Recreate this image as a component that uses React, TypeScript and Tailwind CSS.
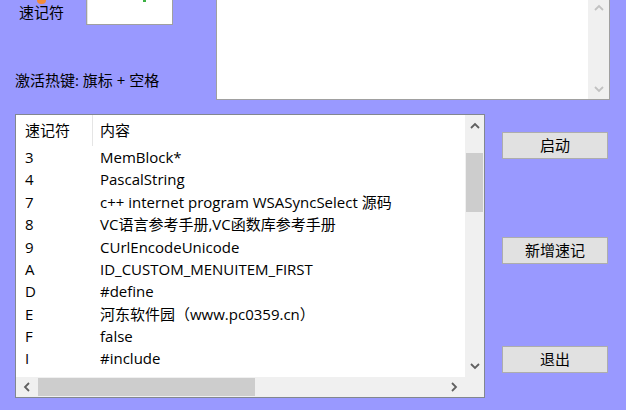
import React from "react"

const rows: [string, string][] = [
  ["3", "MemBlock*"],
  ["4", "PascalString"],
  ["7", "c++ internet program WSASyncSelect 源码"],
  ["8", "VC语言参考手册,VC函数库参考手册"],
  ["9", "CUrlEncodeUnicode"],
  ["A", "ID_CUSTOM_MENUITEM_FIRST"],
  ["D", "#define"],
  ["E", "河东软件园（www.pc0359.cn）"],
  ["F", "false"],
  ["I", "#include"],
]

function Chevron({ dir, color }: { dir: "up" | "down" | "left" | "right"; color: string }) {
  const pts = {
    up: "1,6 5,2 9,6",
    down: "1,2 5,6 9,2",
    left: "6,1 2,5 6,9",
    right: "2,1 6,5 2,9",
  }[dir]
  const w = dir === "up" || dir === "down" ? 10 : 8
  const h = dir === "up" || dir === "down" ? 8 : 10
  return (
    <svg width={w} height={h} viewBox={`0 0 ${w} ${h}`}>
      <polyline points={pts} fill="none" stroke={color} strokeWidth="1.8" />
    </svg>
  )
}

function Button({ label }: { label: string }) {
  return (
    <button className="w-[106px] h-[27px] bg-[#e1e1e1] border border-[#adadad] text-[15px] text-black leading-none">
      {label}
    </button>
  )
}

export default function App() {
  return (
    <div
      className="w-[626px] h-[410px] bg-[#9999ff] overflow-hidden text-[15px] text-black"
      style={{ fontFamily: '"Open Sans", "Noto Sans CJK SC", sans-serif' }}
    >
      {/* top area */}
      <div className="flex h-[100px]">
        <div className="w-[216px] relative">
          {/* partially visible icon */}
          <div className="absolute z-10 left-[37px] top-0 w-[9px] h-[4px] rounded-b-full bg-[#f08a3c]" />
          <div className="flex items-start pl-[19px]">
            <span className="mt-[2px] leading-[20px]">速记符</span>
            <div className="ml-[22px] -mt-[2px] w-[87px] h-[27px] bg-white border border-[#a0a0a0] shadow-[inset_1px_1px_0_#e3e3e3] relative">
              <div className="absolute left-[56px] top-0 w-[3px] h-[3px] bg-[#3cb043]" />
            </div>
          </div>
          <div className="pl-[15px] mt-[45px] leading-[20px]">激活热键: 旗标 + 空格</div>
        </div>
        <div className="-mt-[2px] w-[394px] h-[102px] bg-white border border-[#a0a0a0] flex justify-end">
          <div className="w-[21px] h-full bg-[#f0f0f0] flex flex-col items-center justify-between pt-[5px] pb-[6px]">
            <Chevron dir="up" color="#c2c2c2" />
            <Chevron dir="down" color="#c2c2c2" />
          </div>
        </div>
      </div>

      {/* bottom area */}
      <div className="flex mt-[14px]">
        <div className="ml-[15px] w-[470px] h-[284px] bg-white border border-[#828790] flex flex-col">
          <div className="flex flex-1 min-h-0">
            <div className="flex-1 min-w-0 overflow-hidden">
              <div className="flex h-[31px] items-center">
                <div className="w-[77px] pl-[9px] h-full flex items-center border-r border-[#e5e5e5]">速记符</div>
                <div className="pl-[7px]">内容</div>
              </div>
              {rows.map(([k, v]) => (
                <div key={k} className="flex h-[22.4px] items-center whitespace-nowrap">
                  <div className="w-[84px] pl-[9px]">{k}</div>
                  <div>{v}</div>
                </div>
              ))}
            </div>
            <div className="w-[19px] bg-[#f0f0f0] flex flex-col items-center">
              <div className="h-[22px] flex items-center">
                <Chevron dir="up" color="#606060" />
              </div>
              <div className="mt-[16px] w-[17px] h-[59px] bg-[#cdcdcd]" />
              <div className="flex-1" />
              <div className="h-[22px] flex items-center">
                <Chevron dir="down" color="#606060" />
              </div>
            </div>
          </div>
          <div className="h-[20px] flex bg-[#f0f0f0]">
            <div className="w-[22px] flex items-center justify-center">
              <Chevron dir="left" color="#606060" />
            </div>
            <div className="w-[217px] my-[1px] bg-[#cdcdcd]" />
            <div className="flex-1" />
            <div className="w-[22px] flex items-center justify-center">
              <Chevron dir="right" color="#606060" />
            </div>
            <div className="w-[19px]" />
          </div>
        </div>
        <div className="ml-[17px] flex flex-col">
          <div className="mt-[18px]">
            <Button label="启动" />
          </div>
          <div className="mt-[78px]">
            <Button label="新增速记" />
          </div>
          <div className="mt-[82px]">
            <Button label="退出" />
          </div>
        </div>
      </div>
    </div>
  )
}
